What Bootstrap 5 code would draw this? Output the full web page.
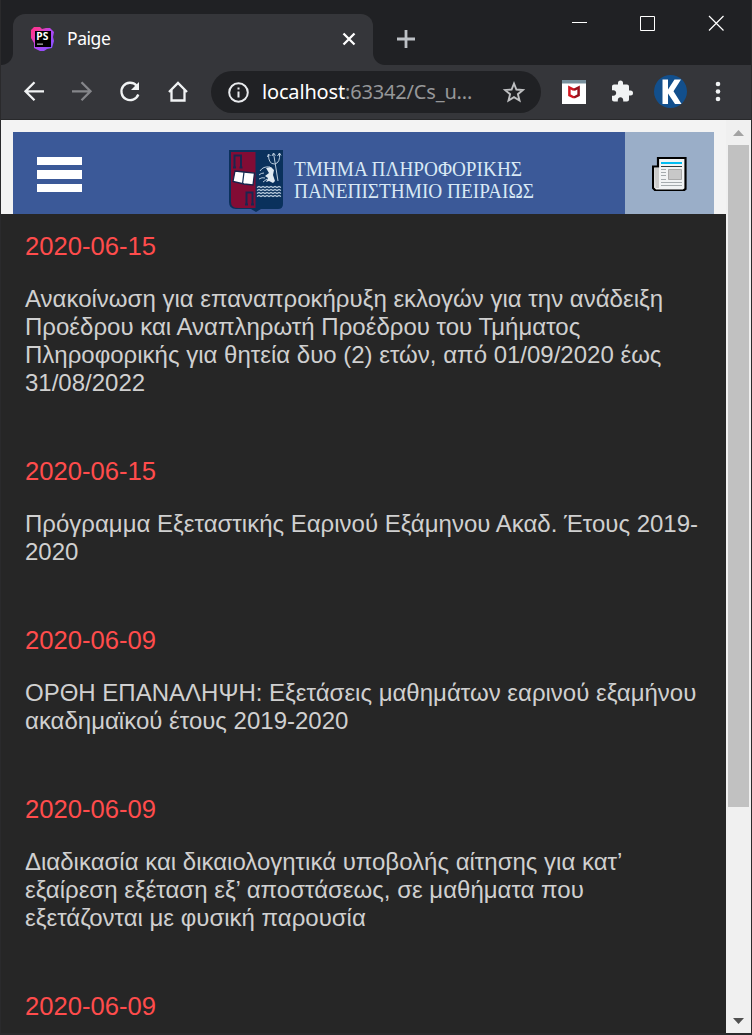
<!DOCTYPE html>
<html lang="el">
<head>
<meta charset="utf-8">
<title>Paige</title>
<link href="https://cdn.jsdelivr.net/npm/bootstrap@5.3.0/dist/css/bootstrap.min.css" rel="stylesheet">
<style>
body{background:#262626;font-family:"Liberation Sans",Arial,sans-serif;overflow:hidden}
svg{display:block;flex:none}
.window{height:1035px;border:solid #2a2a2c;border-width:0 1px 2px 1px}
.chrome-ui{font-family:"Noto Sans","Open Sans",sans-serif}
.tabstrip{height:65px;background:#202124;padding-left:12px}
.browser-tab{width:360px;height:51px;margin-top:14px;background:#35363a;border-radius:12px 12px 0 0;padding:0 15px 2px 17px;color:#fff;font-size:17.5px}
.browser-tab::before,.browser-tab::after{content:"";position:absolute;bottom:0;width:12px;height:12px}
.browser-tab::before{left:-12px;background:radial-gradient(circle at 0 0,#202124 11.5px,#35363a 12.5px)}
.browser-tab::after{right:-12px;background:radial-gradient(circle at 100% 0,#202124 11.5px,#35363a 12.5px)}
.tab-title{margin-left:11px;letter-spacing:-.45px}
.new-tab{margin:29px 0 0 23px}
.win-btn{width:68px;height:46px}
.win-btns{margin-right:1px}
.toolbar{height:55px;background:#35363a;border-bottom:1px solid #28292b;padding-left:9px}
.tool{width:48px;height:54px}
.address{width:330px;height:42px;margin:0 9px;border-radius:21px;background:#202124;padding:0 15px 0 16px;color:#969799;font-size:20px;letter-spacing:-.17px}
.address-text{margin-left:12px;width:212px}
.page-area{min-height:0;background:#f3f3f3}
.top-gap{padding:12px 12px 0}
.site-bar{height:82px;background:#3b5998;padding-left:24px}
.burger{width:45px;margin-top:24.5px;gap:5px}
.burger span{height:8.6px;background:#fff}
.brand{margin:17px 0 0 146px}
.news-btn{width:89px;background:#9aaec8}
.feed{background:#262626;color:#d0d0d0;padding:17px 24px 0;overflow:hidden;min-height:0}
.feed h2{font-size:25.6px;line-height:30px;color:#ff4c4c;margin:0 0 24px;font-weight:400}
.feed p{font-size:24px;line-height:28px;margin:0 0 59px}
.scroll{width:25px;background:#f0f0f0}
.scroll-down{margin-bottom:9px}
.thumb{width:21px;height:662px;background:#c1c1c1;margin-top:9px}
</style>
</head>
<body>
<div class="window d-flex flex-column">
  <header class="chrome-ui">
    <div class="tabstrip d-flex align-items-start">
      <div class="browser-tab position-relative d-flex align-items-center">
        <svg width="26" height="26" viewBox="0 0 26 26"><defs><linearGradient id="ps" x1="0" y1="0" x2="1" y2="1"><stop offset="0" stop-color="#ff2d90"/><stop offset=".22" stop-color="#f33a9c"/><stop offset=".5" stop-color="#b545f5"/><stop offset="1" stop-color="#7a55ff"/></linearGradient></defs><path fill="url(#ps)" d="M1 4 4 1h6l2 2 4-1h4l4 4-1 5 1 4-2 7-5 1-3 2h-4l-2-1-4-2v-5l-3-5z"/><path fill="#000" d="M5 5h16v16H5z"/><text x="6.300" y="14" font-size="9.800" font-weight="700" letter-spacing="0" fill="#fff" textLength="12" lengthAdjust="spacingAndGlyphs">PS</text><path fill="#aaa" d="M7 17.500h6v1.300H7z"/></svg>
        <span class="tab-title">Paige</span>
        <svg class="ms-auto" width="18" height="18" viewBox="0 0 18 18"><path d="m3.500 3.500 11 11m0-11-11 11" stroke="#fff" stroke-width="2.300"/></svg>
      </div>
      <svg class="new-tab" width="20" height="20" viewBox="0 0 20 20"><path d="M1 10h18M10 1v18" stroke="#bdc1c6" stroke-width="2.800"/></svg>
      <div class="win-btns ms-auto d-flex">
        <div class="win-btn"><svg width="68" height="46"><path d="M26 22.500h15" stroke="#fff"/></svg></div>
        <div class="win-btn"><svg width="68" height="46"><path d="M26.500 16.500h14v14h-14z" fill="none" stroke="#fff"/></svg></div>
        <div class="win-btn"><svg width="68" height="46"><path d="m27 16 14.500 14.500m0-14.500L27 30.500" stroke="#fff" stroke-width="1.200"/></svg></div>
      </div>
    </div>
    <div class="toolbar d-flex align-items-center">
      <div class="tool"><svg width="48" height="54" fill="none" stroke="#f1f3f4" stroke-width="2.300"><path d="M34 26.300H16M24.500 17.300l-9 9 9 9"/></svg></div>
      <div class="tool"><svg width="48" height="54" fill="none" stroke="#85868a" stroke-width="2.300"><path d="M14 26.300h18M23.500 17.300l9 9-9 9"/></svg></div>
      <div class="tool"><svg width="48" height="54"><path d="M30.500 20.500A8.700 8.700 0 1 0 32.300 29.500" fill="none" stroke="#f1f3f4" stroke-width="2.300"/><path d="M33 17v8h-8z" fill="#f1f3f4"/></svg></div>
      <div class="tool"><svg width="48" height="54"><path d="m15 27 9-9 9 9M17.500 25v10.500h13V25" fill="none" stroke="#f1f3f4" stroke-width="2.300"/></svg></div>
      <div class="address d-flex align-items-center">
        <svg width="23" height="23"><circle cx="11.500" cy="11.500" r="9.300" fill="none" stroke="#e8eaed" stroke-width="2"/><path d="M10.500 10.500h2v6h-2zM10.500 6.500h2v2h-2z" fill="#e8eaed"/></svg>
        <div class="address-text text-nowrap"><span class="text-white">localhost</span>:63342/Cs_u...</div>
        <svg class="ms-auto" width="24" height="24"><path d="m12 3.500 2.400 6 6.500.5-5 4.200 1.600 6.300-5.500-3.400-5.500 3.400 1.600-6.300-5-4.200 6.500-.5z" fill="none" stroke="#bfc0c2" stroke-width="1.900"/></svg>
      </div>
      <div class="tool"><svg width="48" height="54"><path d="M12 15h24v24H12z" fill="#fff"/><path d="M12 15h24v3.500H12z" fill="#78909c"/><path d="M24 24.800 19.400 22.500v7.700l4.600 2.300" fill="none" stroke="#d3151f" stroke-width="2.500"/><path d="m24 24.800 4.600-2.300v7.700L24 32.500" fill="none" stroke="#97101a" stroke-width="2.500"/></svg></div>
      <div class="tool"><svg width="48" height="54" viewBox="0 0 48 54"><path transform="translate(12 14.500)" d="M20.500 11H19V7c0-1.100-.9-2-2-2h-4V3.500a2.500 2.500 0 0 0-5 0V5H4c-1.100 0-1.990.9-1.990 2v3.800H3.500c1.490 0 2.700 1.210 2.700 2.700s-1.210 2.700-2.700 2.700H2V20c0 1.100.9 2 2 2h3.800v-1.500c0-1.490 1.210-2.700 2.700-2.700s2.700 1.210 2.700 2.700V22H17c1.100 0 2-.9 2-2v-4h1.500a2.500 2.500 0 0 0 0-5z" fill="#f1f3f4"/></svg></div>
      <div class="tool"><svg width="48" height="54"><circle cx="24.500" cy="26.500" r="16.500" fill="#124f8c"/><path d="M16.500 14.500h5.500v10L28.500 14.500h6.500l-7.500 11.800 8 12.700H29L22 28.500V39h-5.500z" fill="#fff"/></svg></div>
      <div class="tool"><svg width="48" height="54" fill="#f1f3f4"><circle cx="24" cy="19" r="2.300"/><circle cx="24" cy="26.500" r="2.300"/><circle cx="24" cy="34" r="2.300"/></svg></div>
    </div>
  </header>
  <div class="page-area d-flex flex-grow-1">
    <main class="d-flex flex-column flex-grow-1">
      <div class="top-gap">
        <nav class="site-bar d-flex">
          <div class="burger d-flex flex-column"><span></span><span></span><span></span></div>
          <svg class="brand" width="320" height="64" viewBox="228 149 320 64">
            <path d="M229 150h54v54q0 5-5 5h-17l-5 3-5-3h-15q-7 0-7-7z" fill="#0a315c"/>
            <path d="M231 152h24.500v56H238q-7 0-7-6z" fill="#820c35"/>
            <path d="M234.500 167.500v-12h6.500v12M233 167.500h3m3.500 0h3M246.500 204.500v-12h6v12M245 204.500h3m3 0h3" fill="none" stroke="#1a2650" stroke-width="2"/>
            <path d="m235 171 9 1 10.500 1-1.500 12-9-1-11-2.500z" fill="#fff" stroke="#17254c" stroke-width="1.300"/><path d="m244 172-1.500 12" stroke="#173057" stroke-width="1.300"/>
            <g fill="none" stroke="#b9cbdc"><path d="M268.500 155q0 9 6 9 6-1 5-11M273.500 153l4.500 28M267.500 157l1-3 2 2M272 156l1.500-3 2 2.500M277.500 156l2-3 1.500 2.500"/><path d="M257 187.500l2-1 2 1 2-1 2 1 2-1 2 1 2-1 2 1 2-1 2 1 2-1 2 1M257 190.500l2-1 2 1 2-1 2 1 2-1 2 1 2-1 2 1 2-1 2 1 2-1 2 1M257 193.500l2-1 2 1 2-1 2 1 2-1 2 1 2-1 2 1 2-1 2 1 2-1 2 1M257 196.500l2-1 2 1 2-1 2 1 2-1 2 1 2-1 2 1 2-1 2 1 2-1 2 1" stroke-width="1.300"/><path d="M260 171q3-5 10-4M259 175q2-2 5-2M259 179q3-2 6-1M263 182l4-3" stroke-width="1"/></g>
            <path d="m266 168 5-1 3 3-1 5 2 6-2 2-4-2-3 1 2-4-3-2 4-3z" fill="#e0e9f1"/>
            <g font-family="Liberation Serif,serif" font-size="20.500" fill="#d9e9f5"><text x="294" y="175.500" textLength="228" lengthAdjust="spacingAndGlyphs">ΤΜΗΜΑ ΠΛΗΡΟΦΟΡΙΚΗΣ</text><text x="294" y="198" textLength="240" lengthAdjust="spacingAndGlyphs">ΠΑΝΕΠΙΣΤΗΜΙΟ ΠΕΙΡΑΙΩΣ</text></g>
          </svg>
          <div class="news-btn ms-auto d-flex justify-content-center align-items-center">
            <svg width="36" height="36" viewBox="652 155 36 36"><path d="M658 158h27.500v31l-2 1.500h-28l-2.500-2.500V166.500h5z" fill="#f1f3f4" stroke="#000" stroke-width="2.200"/><path d="M654.500 168h4.500v20h-3.500z" fill="#ccc"/><path d="M661 162h21v2h-21z" fill="#00bdf2"/><path d="M661 166.500h21" stroke="#303a3c"/><path d="M661 169.500h5M661 172.500h5M661 175.500h5M661 179.500h5M661 182.500h21M661 185.500h21" stroke="#a5abae"/><path d="M668.500 169.500h13v10h-13z" fill="#c8c8c8" stroke="#a9a9a9"/></svg>
          </div>
        </nav>
      </div>
      <section class="feed flex-grow-1">
        <h2>2020-06-15</h2>
        <p>Ανακοίνωση για επαναπροκήρυξη εκλογών για την ανάδειξη<br>Προέδρου και Αναπληρωτή Προέδρου του Τμήματος<br>Πληροφορικής για θητεία δυο (2) ετών, από 01/09/2020 έως<br>31/08/2022</p>
        <h2>2020-06-15</h2>
        <p>Πρόγραμμα Εξεταστικής Εαρινού Εξάμηνου Ακαδ. Έτους 2019-<br>2020</p>
        <h2>2020-06-09</h2>
        <p>ΟΡΘΗ ΕΠΑΝΑΛΗΨΗ: Εξετάσεις μαθημάτων εαρινού εξαμήνου<br>ακαδημαϊκού έτους 2019-2020</p>
        <h2>2020-06-09</h2>
        <p>Διαδικασία και δικαιολογητικά υποβολής αίτησης για κατ’<br>εξαίρεση εξέταση εξ’ αποστάσεως, σε μαθήματα που<br>εξετάζονται με φυσική παρουσία</p>
        <h2>2020-06-09</h2>
      </section>
    </main>
    <aside class="scroll d-flex flex-column align-items-center">
      <svg width="11" height="16"><path d="m0 16 5.500-6 5.500 6z" fill="#a3a3a3"/></svg>
      <div class="thumb"></div>
      <svg class="scroll-down mt-auto" width="11" height="6"><path d="M0 0h11L5.500 6z" fill="#505050"/></svg>
    </aside>
  </div>
</div>
<script src="https://cdn.jsdelivr.net/npm/bootstrap@5.3.0/dist/js/bootstrap.bundle.min.js"></script>
</body>
</html>
